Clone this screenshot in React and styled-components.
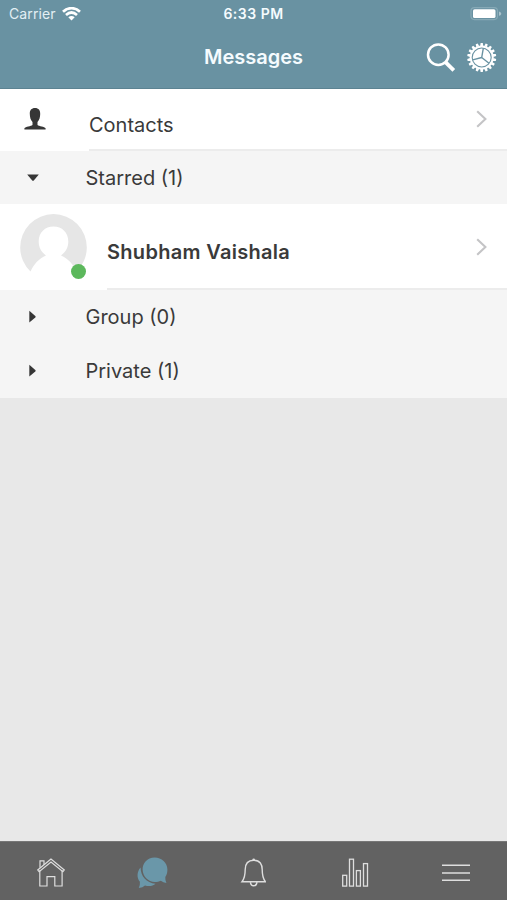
import { useState } from 'react';
import styled, { createGlobalStyle } from 'styled-components'

const GlobalStyle = createGlobalStyle`
  * {
    box-sizing: border-box;
  }
  body {
    margin: 0;
    font-family: Inter, "Liberation Sans", sans-serif;
    color: #3a3a3a;
    background: #e8e8e8;
  }
`

const Screen = styled.div`
  display: flex;
  flex-direction: column;
  height: 900px;
  background: #e8e8e8;
`

const Header = styled.header`
  height: 89px;
  flex-shrink: 0;
  color: #f5fbfe;
  background: #6992a2;
  border-bottom: 1px solid #5c8392;
`

const StatusBar = styled.div`
  display: grid;
  grid-template-columns: 1fr auto 1fr;
  align-items: center;
  height: 27px;
  padding: 0 5px 0 9px;
`

const Carrier = styled.div`
  display: flex;
  align-items: center;
  gap: 6px;
  font-size: 14px;
  letter-spacing: 0.1px;
  color: #e3eff4;
`

const Clock = styled.div`
  margin-right: 4px;
  font-size: 14px;
  font-weight: 600;
  letter-spacing: 0.5px;
`

const BatteryArea = styled.div`
  display: flex;
  justify-content: flex-end;
`

const NavBar = styled.div`
  display: grid;
  grid-template-columns: 1fr auto 1fr;
  align-items: center;
  height: 60px;
  padding-right: 10px;
  padding-left: 10px;
`

const Title = styled.h1`
  grid-column: 2;
  margin: 0;
  font-size: 20px;
  font-weight: 600;
  line-height: 24px;
`

const NavActions = styled.div`
  display: flex;
  justify-content: flex-end;
  align-items: center;
  gap: 11px;
`

const IconButton = styled.button`
  display: flex;
  padding: 0;
  color: inherit;
  border: none;
  background: none;
  cursor: pointer;
`

const List = styled.main`
  flex: 1;
`

const ListRow = styled.div`
  display: flex;
  height: ${props => props.$height}px;
  padding-left: ${props => props.$left}px;
  background: #fff;
`

const RowBody = styled.div`
  display: flex;
  flex: 1;
  justify-content: space-between;
  align-items: center;
  margin-left: ${props => props.$gap}px;
  padding-top: ${props => props.$top || 0}px;
  padding-right: 20px;
  border-bottom: 2px solid #ececec;
`

const RowLabel = styled.span`
  padding-top: ${props => props.$top}px;
  font-size: 20px;
  font-weight: ${props => props.$bold ? 600 : 400};
  letter-spacing: ${props => props.$bold ? '0.3px' : 'normal'};
`

const PersonIcon = styled.svg`
  margin-top: 18px;
`

const Avatar = styled.div`
  position: relative;
  width: 67px;
  height: 67px;
  margin-top: 10px;
`

const OnlineDot = styled.span`
  position: absolute;
  right: 1px;
  bottom: 2px;
  width: 15px;
  height: 15px;
  border-radius: 50%;
  background: #5cb85c;
`

const SectionRow = styled.div`
  display: flex;
  align-items: center;
  height: ${props => props.$height}px;
  padding-left: 26px;
  font-size: 20px;
  background: #f5f5f5;
  cursor: pointer;
`

const SectionLabel = styled.span`
  margin-left: 45.5px;
`

const TabBar = styled.nav`
  display: grid;
  grid-template-columns: repeat(5, 1fr);
  height: 59px;
  background: #626262;
  border-top: 1px solid #777;
`

const Tab = styled.button`
  display: flex;
  justify-content: center;
  align-items: center;
  padding: 4px 0 0;
  color: ${props => props.$active ? '#6a97a9' : '#dedede'};
  border: none;
  background: none;
  cursor: pointer;
`

function WifiIcon() {
  return (
    <svg width="19" height="14" viewBox="0 .5 19 14" fill="none" stroke="#fff" strokeWidth="2.7">
      <path d="M1 5.2C6 .5 13 .5 18 5.2M4 8.4c3.4-3 7.6-3 11 0" />
      <path d="M6.3 10.8c2-1.7 4.4-1.7 6.4 0L9.5 14z" fill="#fff" stroke="none" />
    </svg>
  )
}

function BatteryIcon() {
  return (
    <svg width="32" height="14" viewBox="0 0 32 14">
      <rect x="1" y=".6" width="26.5" height="12" rx="3.5" fill="none" stroke="#86a9b6" strokeWidth="1.2" />
      <rect x="3" y="2.2" width="22.5" height="8.8" rx="1.6" fill="#fff" />
      <path d="M29 4.4c3 .8 3 3.6 0 4.4z" fill="#a9c2cc" />
    </svg>
  )
}

function SearchIcon() {
  return (
    <svg width="30" height="30" viewBox="0 -.5 30 30" fill="none" stroke="#fff">
      <circle cx="12.3" cy="12.2" r="10.3" strokeWidth="2.5" />
      <path d="M19.7 19.8l8.1 8" strokeWidth="3.8" />
    </svg>
  )
}

const TEETH = Array.from({ length: 18 }, (_, i) => i * 20)

function GearIcon() {
  return (
    <svg width="30" height="30" viewBox="-14.7 -15.5 30 30">
      <circle r="12" fill="#fff" />
      {TEETH.map(angle => (
        <path key={angle} d="M-1.5-11.5L-1.1-14.5H1.1L1.5-11.5z" fill="#fff" transform={`rotate(${angle})`} />
      ))}
      <circle r="9.5" fill="none" stroke="#6992a2" strokeWidth="1.1" />
      <path d="M0 0L1.600-9.200M0 0L-9 2.400M0 0L7.300 5.800" stroke="#6992a2" strokeWidth="1.400" />
    </svg>
  )
}

function ChevronIcon() {
  return (
    <svg width="11" height="18" viewBox="0 0 11 18" fill="none" stroke="#c4c4c6" strokeWidth="2.1">
      <path d="M1.2 1.2L9.4 9l-8.2 7.8" />
    </svg>
  )
}

function AvatarIcon() {
  return (
    <svg width="67" height="67" viewBox="0 0 67 67">
      <path d="M10.500 57.500A33.300 33.300 0 1 1 56.500 57.500C53 50 48 44.500 41 41.500C46 38 48.300 33 48.300 27.500C48.300 18.500 42 12.500 33.500 12.500S18.700 18.500 18.700 27.500C18.700 33 21 38 26 41.500C19 44.500 14 50 10.500 57.500z" fill="#e6e6e6" />
    </svg>
  )
}

function ArrowIcon({ open }) {
  return (
    <svg width="14" height="14" viewBox="0 0 14 14" fill="#363636">
      <path d={open ? 'M1.2 3.6h11.6L8 9.2q-1 1-2 0z' : 'M3.3 .8L9.3 6q.8.8 0 1.6l-6 5z'} />
    </svg>
  )
}

function HomeIcon() {
  return (
    <svg width="28" height="30" viewBox="0 0 28 30" fill="none" stroke="currentColor" strokeWidth="1.2">
      <path d="M2.8 12.2V28h7.2V18.7h7.8V28h7.3V12.2" />
      <path d="M14 1L.7 12l1.4 1.6L14 4l11.9 9.6L27.3 12z" />
      <path d="M3 9.8V2.8h4v4" />
    </svg>
  )
}

function ChatIcon() {
  return (
    <svg width="32" height="32" viewBox="0 0 32 32" fill="currentColor">
      <path d="M4.600 10.500C.8 14.500.6 21 3.900 24.700Q4.200 28 2.800 31q4-.2 6.200-2.500C13 29.800 17 29 19.500 26.700C10.500 26 4.500 19 4.600 10.500z" />
      <path d="M18.800.6C10.900.6 6.600 6.400 6.600 12.300c0 7.200 5.600 12.700 12.200 12.700 2.200 0 4.300-.4 6-1.200q2.500 2 5.600 2.200-1.300-2.700-1.100-6c1.600-2 2.100-4.600 2.100-7.400C31.400 6 25.500.6 18.800.6z" />
    </svg>
  )
}

function BellIcon() {
  return (
    <svg width="26" height="30" viewBox="-.7 .4 26 30" fill="none" stroke="currentColor" strokeWidth="1.4">
      <path d="M13 2.600C6.600 2.600 4.500 7 4.500 12C4.500 19 3.500 21.500 1.300 24.200h23.400C22.500 21.500 21.500 19 21.500 12C21.500 7 19.400 2.600 13 2.600z" />
      <path d="M9.700 24.500q.4 3.700 3.300 3.700t3.300-3.700" />
      <circle cx="13" cy="2.200" r="1.300" fill="currentColor" stroke="none" />
    </svg>
  )
}

function ChartIcon() {
  return (
    <svg width="28" height="30" viewBox="0 0 28 30" fill="none" stroke="currentColor" strokeWidth="1.3">
      <rect x="1.700" y="17.300" width="4" height="10.800" />
      <rect x="8.500" y="1.200" width="4" height="26.900" />
      <rect x="15.400" y="12.600" width="4" height="15.500" />
      <rect x="22.500" y="5.600" width="4" height="22.500" />
    </svg>
  )
}

function MenuIcon() {
  return (
    <svg width="28" height="30" viewBox="0 0 28 30" stroke="currentColor" strokeWidth="1.500">
      <path d="M0 7.200h28M0 14.900h28M0 22.300h28" />
    </svg>
  )
}

const tabs = [
  { name: 'home', Icon: HomeIcon },
  { name: 'chat', Icon: ChatIcon },
  { name: 'alerts', Icon: BellIcon },
  { name: 'stats', Icon: ChartIcon },
  { name: 'menu', Icon: MenuIcon },
]

function Section({ label, height, open }) {
  return (
    <SectionRow $height={height}>
      <ArrowIcon open={open} />
      <SectionLabel>{label}</SectionLabel>
    </SectionRow>
  )
}

export default function App() {
  const [activeTab, setActiveTab] = useState('chat')

  return (
    <Screen>
      <GlobalStyle />
      <Header>
        <StatusBar>
          <Carrier>Carrier <WifiIcon /></Carrier>
          <Clock>6:33 PM</Clock>
          <BatteryArea><BatteryIcon /></BatteryArea>
        </StatusBar>
        <NavBar>
          <Title>Messages</Title>
          <NavActions>
            <IconButton><SearchIcon /></IconButton>
            <IconButton><GearIcon /></IconButton>
          </NavActions>
        </NavBar>
      </Header>
      <List>
        <ListRow $height={62} $left={24}>
          <PersonIcon width="22" height="24" viewBox="0 0 22 24" fill="#363636">
            <path d="M11 1C7.500 1 5.600 3.300 5.800 7C5.900 10 6.500 13 8.500 15V18C7 19.400 1.500 19.500.4 21.200V22.600H21.600V21.200C20.500 19.500 15 19.400 13.500 18V15C15.500 13 16.100 10 16.200 7C16.400 3.300 14.500 1 11 1z" />
          </PersonIcon>
          <RowBody $gap={43}>
            <RowLabel $top={11}>Contacts</RowLabel>
            <ChevronIcon />
          </RowBody>
        </ListRow>
        <Section label="Starred (1)" height={53} open />
        <ListRow $height={86} $left={20}>
          <Avatar>
            <AvatarIcon />
            <OnlineDot />
          </Avatar>
          <RowBody $gap={20} $top={2}>
            <RowLabel $top={10} $bold>Shubham Vaishala</RowLabel>
            <ChevronIcon />
          </RowBody>
        </ListRow>
        <Section label="Group (0)" height={54} />
        <Section label="Private (1)" height={54} />
      </List>
      <TabBar>
        {tabs.map(({ name, Icon }) => (
          <Tab key={name} $active={name === activeTab} onClick={() => setActiveTab(name)}>
            <Icon />
          </Tab>
        ))}
      </TabBar>
    </Screen>
  );
}
